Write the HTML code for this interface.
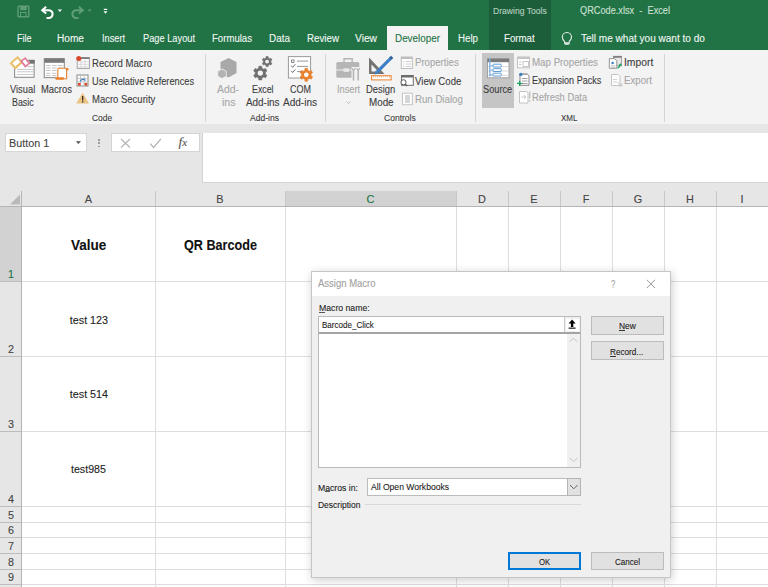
<!DOCTYPE html>
<html><head><meta charset="utf-8"><style>
html,body{margin:0;padding:0;width:768px;height:587px;overflow:hidden;background:#fff;position:relative;font-family:"Liberation Sans",sans-serif}
body>div{position:absolute}
.t{white-space:pre;transform-origin:0 0;-webkit-text-stroke:0.1px currentColor}
</style></head><body>
<div style="left:0px;top:0px;width:768px;height:50px;background:#217346"></div>
<div style="left:488.75px;top:0px;width:62.25px;height:50px;background:#1b5e39"></div>
<div class="t" style="left:493.40px;top:6.99px;font-size:8.87px;line-height:8.87px;color:#b9d1c1;transform:scaleX(0.969);">Drawing Tools</div>
<div class="t" style="left:580.00px;top:5.94px;font-size:10.47px;line-height:10.47px;color:#cfe1d5;transform:scaleX(0.879);">QRCode.xlsx&nbsp;&nbsp;-&nbsp;&nbsp;Excel</div>
<div style="left:386.5px;top:26px;width:61.5px;height:24px;background:#f3f3f3"></div>
<div class="t" style="left:16.50px;top:33.02px;font-size:10.61px;line-height:10.61px;color:#f2f7f4;transform:scaleX(0.848);">File</div>
<div class="t" style="left:57.00px;top:33.02px;font-size:10.61px;line-height:10.61px;color:#f2f7f4;transform:scaleX(0.954);">Home</div>
<div class="t" style="left:102.00px;top:33.02px;font-size:10.61px;line-height:10.61px;color:#f2f7f4;transform:scaleX(0.867);">Insert</div>
<div class="t" style="left:143.00px;top:33.02px;font-size:10.61px;line-height:10.61px;color:#f2f7f4;transform:scaleX(0.873);">Page Layout</div>
<div class="t" style="left:212.00px;top:33.02px;font-size:10.61px;line-height:10.61px;color:#f2f7f4;transform:scaleX(0.905);">Formulas</div>
<div class="t" style="left:269.00px;top:33.02px;font-size:10.61px;line-height:10.61px;color:#f2f7f4;transform:scaleX(0.937);">Data</div>
<div class="t" style="left:307.00px;top:33.02px;font-size:10.61px;line-height:10.61px;color:#f2f7f4;transform:scaleX(0.920);">Review</div>
<div class="t" style="left:355.00px;top:33.02px;font-size:10.61px;line-height:10.61px;color:#f2f7f4;transform:scaleX(0.965);">View</div>
<div class="t" style="left:457.50px;top:33.02px;font-size:10.61px;line-height:10.61px;color:#f2f7f4;transform:scaleX(0.917);">Help</div>
<div class="t" style="left:504.00px;top:33.02px;font-size:10.61px;line-height:10.61px;color:#f2f7f4;transform:scaleX(0.914);">Format</div>
<div class="t" style="left:580.60px;top:33.02px;font-size:10.61px;line-height:10.61px;color:#f2f7f4;transform:scaleX(0.946);">Tell me what you want to do</div>
<div class="t" style="left:395.00px;top:33.02px;font-size:10.61px;line-height:10.61px;color:#217346;transform:scaleX(0.930);">Developer</div>
<div style="left:0px;top:50px;width:768px;height:74px;background:#f3f3f3"></div>
<div style="left:205px;top:54px;width:1px;height:68px;background:#d4d4d4"></div>
<div style="left:325px;top:54px;width:1px;height:68px;background:#d4d4d4"></div>
<div style="left:475px;top:54px;width:1px;height:68px;background:#d4d4d4"></div>
<div style="left:664px;top:54px;width:1px;height:68px;background:#d4d4d4"></div>
<div class="t" style="left:9.70px;top:85.06px;font-size:10.32px;line-height:10.32px;color:#3c3c3c;transform:scaleX(0.903);">Visual</div>
<div class="t" style="left:12.30px;top:97.96px;font-size:10.32px;line-height:10.32px;color:#3c3c3c;transform:scaleX(0.860);">Basic</div>
<div class="t" style="left:40.60px;top:85.06px;font-size:10.32px;line-height:10.32px;color:#3c3c3c;transform:scaleX(0.916);">Macros</div>
<div class="t" style="left:91.50px;top:57.90px;font-size:10.76px;line-height:10.76px;color:#3c3c3c;transform:scaleX(0.891);">Record Macro</div>
<div class="t" style="left:91.50px;top:75.90px;font-size:10.76px;line-height:10.76px;color:#3c3c3c;transform:scaleX(0.858);">Use Relative References</div>
<div class="t" style="left:91.50px;top:93.90px;font-size:10.76px;line-height:10.76px;color:#3c3c3c;transform:scaleX(0.883);">Macro Security</div>
<div class="t" style="left:91.90px;top:114.03px;font-size:9.30px;line-height:9.30px;color:#3c3c3c;transform:scaleX(0.904);">Code</div>
<div class="t" style="left:217.20px;top:85.06px;font-size:10.32px;line-height:10.32px;color:#a6a6a6;transform:scaleX(1.009);">Add-</div>
<div class="t" style="left:221.50px;top:97.96px;font-size:10.32px;line-height:10.32px;color:#a6a6a6;transform:scaleX(1.023);">ins</div>
<div class="t" style="left:251.90px;top:84.86px;font-size:10.32px;line-height:10.32px;color:#3c3c3c;transform:scaleX(0.856);">Excel</div>
<div class="t" style="left:246.00px;top:97.96px;font-size:10.32px;line-height:10.32px;color:#3c3c3c;transform:scaleX(0.960);">Add-ins</div>
<div class="t" style="left:289.50px;top:84.86px;font-size:10.32px;line-height:10.32px;color:#3c3c3c;transform:scaleX(0.872);">COM</div>
<div class="t" style="left:283.10px;top:97.96px;font-size:10.32px;line-height:10.32px;color:#3c3c3c;transform:scaleX(0.972);">Add-ins</div>
<div class="t" style="left:250.40px;top:114.03px;font-size:9.30px;line-height:9.30px;color:#3c3c3c;transform:scaleX(0.919);">Add-ins</div>
<div class="t" style="left:336.50px;top:85.06px;font-size:10.32px;line-height:10.32px;color:#a6a6a6;transform:scaleX(0.899);">Insert</div>
<div class="t" style="left:366.40px;top:84.86px;font-size:10.32px;line-height:10.32px;color:#3c3c3c;transform:scaleX(0.909);">Design</div>
<div class="t" style="left:369.00px;top:98.16px;font-size:10.32px;line-height:10.32px;color:#3c3c3c;transform:scaleX(0.953);">Mode</div>
<div class="t" style="left:415.40px;top:57.20px;font-size:10.76px;line-height:10.76px;color:#a6a6a6;transform:scaleX(0.893);">Properties</div>
<div class="t" style="left:415.40px;top:75.50px;font-size:10.76px;line-height:10.76px;color:#3c3c3c;transform:scaleX(0.895);">View Code</div>
<div class="t" style="left:415.40px;top:93.70px;font-size:10.76px;line-height:10.76px;color:#a6a6a6;transform:scaleX(0.898);">Run Dialog</div>
<div class="t" style="left:384.00px;top:114.03px;font-size:9.30px;line-height:9.30px;color:#3c3c3c;transform:scaleX(0.918);">Controls</div>
<div style="left:481.9px;top:53.3px;width:32.5px;height:55.1px;background:#c5c5c5"></div>
<div class="t" style="left:483.40px;top:85.06px;font-size:10.32px;line-height:10.32px;color:#3c3c3c;transform:scaleX(0.893);">Source</div>
<div class="t" style="left:532.00px;top:56.90px;font-size:10.76px;line-height:10.76px;color:#a6a6a6;transform:scaleX(0.905);">Map Properties</div>
<div class="t" style="left:532.00px;top:74.60px;font-size:10.76px;line-height:10.76px;color:#3c3c3c;transform:scaleX(0.839);">Expansion Packs</div>
<div class="t" style="left:532.00px;top:91.60px;font-size:10.76px;line-height:10.76px;color:#a6a6a6;transform:scaleX(0.871);">Refresh Data</div>
<div class="t" style="left:624.00px;top:56.90px;font-size:10.76px;line-height:10.76px;color:#3c3c3c;transform:scaleX(0.961);">Import</div>
<div class="t" style="left:624.00px;top:74.60px;font-size:10.76px;line-height:10.76px;color:#a6a6a6;transform:scaleX(0.901);">Export</div>
<div class="t" style="left:561.30px;top:114.03px;font-size:9.30px;line-height:9.30px;color:#3c3c3c;transform:scaleX(0.863);">XML</div>
<svg style="position:absolute;left:17px;top:5px;width:13px;height:13px;overflow:visible" viewBox="0 0 13 13"><rect x="1" y="1.2" width="10.8" height="10.5" rx="0.8" fill="none" stroke="#5f9d78" stroke-width="1.4"/><rect x="3.2" y="1.2" width="6.5" height="4" fill="#5f9d78"/><rect x="3.5" y="7.5" width="5.5" height="4" fill="none" stroke="#5f9d78" stroke-width="1"/></svg>
<svg style="position:absolute;left:40px;top:6px;width:16px;height:13px;overflow:visible" viewBox="0 0 16 13"><path d="M3 4.2 H9.5 A4 4 0 0 1 9.5 12 H6.5" fill="none" stroke="#fff" stroke-width="2"/><path d="M6.2 0.8 L2.2 4.2 L6.2 7.6" fill="none" stroke="#fff" stroke-width="2"/></svg>
<svg style="position:absolute;left:57px;top:9px;width:6px;height:4px;overflow:visible" viewBox="0 0 6 4"><path d="M0.8 0.6 H5 L2.9 3 Z" fill="#fff"/></svg>
<svg style="position:absolute;left:69px;top:6px;width:16px;height:13px;overflow:visible" viewBox="0 0 16 13"><path d="M13 4.2 H6.5 A4 4 0 0 0 6.5 12 H9.5" fill="none" stroke="#5f9d78" stroke-width="2"/><path d="M9.8 0.8 L13.8 4.2 L9.8 7.6" fill="none" stroke="#5f9d78" stroke-width="2"/></svg>
<svg style="position:absolute;left:87px;top:9px;width:5px;height:4px;overflow:visible" viewBox="0 0 5 4"><path d="M0.8 0.6 H4.4 L2.6 2.8 Z" fill="#5f9d78"/></svg>
<svg style="position:absolute;left:103px;top:8px;width:5px;height:7px;overflow:visible" viewBox="0 0 5 7"><rect x="0.8" y="0.8" width="3.4" height="1.2" fill="#fff"/><path d="M0.5 3.2 H4.5 L2.5 5.8 Z" fill="#fff"/></svg>
<svg style="position:absolute;left:561px;top:32px;width:12px;height:14px;overflow:visible" viewBox="0 0 12 14"><path d="M3.7 9.6 C2 8.2 1.3 6.6 1.3 5.1 A4.6 4.6 0 0 1 10.5 5.1 C10.5 6.6 9.8 8.2 8.1 9.6 V11.6 H3.7 Z" fill="none" stroke="#e8f0eb" stroke-width="1.1"/><rect x="4.1" y="10.2" width="3.6" height="2.6" fill="#d5e4da"/></svg>
<svg style="position:absolute;left:13px;top:55px;width:24px;height:25px;overflow:visible" viewBox="0 0 24 25"><rect x="1.6" y="5.4" width="19.5" height="16.9" fill="#fff" stroke="#8f8f8f" stroke-width="1.1"/><rect x="16.3" y="4.9" width="5.3" height="3.8" fill="#737373"/><g stroke="#c2c2c2" stroke-width="0.9"><path d="M4 14.4H20M4 16.8H20M4 19.5H20M14 11.6H20"/></g><g transform="translate(3.3 7.6) rotate(-42)"><rect x="-4.4" y="-3.1" width="8.8" height="6.2" fill="#fff" stroke="#e9c06a" stroke-width="2"/><rect x="-5.4" y="3" width="10.8" height="1.4" fill="#e9c06a"/></g><g transform="translate(12.3 7.3) rotate(52)"><rect x="-3.3" y="-2.4" width="6.6" height="4.8" fill="#fff" stroke="#e27c98" stroke-width="1.6"/><rect x="-4.1" y="2.3" width="8.2" height="1.1" fill="#e27c98"/></g></svg>
<svg style="position:absolute;left:43px;top:57px;width:26px;height:24px;overflow:visible" viewBox="0 0 26 24"><rect x="1.3" y="1.6" width="20" height="19" fill="#fff" stroke="#8f8f8f" stroke-width="1.1"/><rect x="1.3" y="1.6" width="20" height="4.2" fill="#7a7a7a"/><g stroke="#c0c0c0" stroke-width="0.9" stroke-dasharray="4.6 1.4"><path d="M3 8.5H20M3 11H20M3 13.5H20M3 16.3H20M3 18.5H20"/></g><path d="M14.8 21.5 V12.6 Q14.8 11.3 16.1 11.3 H23.2 Q23.6 11.3 23.6 12.4 V21.8 H14.8 Z" fill="#fff" stroke="#e8822e" stroke-width="1.1"/><circle cx="24.2" cy="12.3" r="1.3" fill="#e8822e"/><rect x="12.3" y="20.2" width="9" height="2.6" rx="1.2" fill="#e8822e"/></svg>
<svg style="position:absolute;left:76px;top:55px;width:15px;height:15px;overflow:visible" viewBox="0 0 15 15"><rect x="1.2" y="2.6" width="12.2" height="10.8" fill="#fff" stroke="#9a9a9a" stroke-width="0.9"/><rect x="1.2" y="2.4" width="12.2" height="1.6" fill="#7a7a7a"/><g stroke="#d0d0d0" stroke-width="0.8"><path d="M2 6.8H13M2 9.3H13M2 11.8H13M5 4.5V13M9 4.5V13"/></g><circle cx="2.8" cy="3.6" r="2.5" fill="#d9472b"/></svg>
<svg style="position:absolute;left:76px;top:74px;width:14px;height:13px;overflow:visible" viewBox="0 0 14 13"><rect x="1" y="1" width="11" height="11" fill="#fff" stroke="#8c8c8c" stroke-width="1"/><g stroke="#b5b5b5" stroke-width="0.8"><path d="M1 4.5H12M1 8H12M4.5 1V12M8 1V12"/></g><path d="M4 7.5 Q6.5 3.8 9.5 6.5" fill="none" stroke="#3b7fc4" stroke-width="1.3"/><rect x="2" y="9" width="2.6" height="2.6" fill="#d9472b"/><rect x="8.6" y="9" width="2.6" height="2.6" fill="#d9472b"/></svg>
<svg style="position:absolute;left:76px;top:92px;width:14px;height:12px;overflow:visible" viewBox="0 0 14 12"><path d="M6.6 0.8 L13 11.5 H0.2 Z" fill="#eac282"/><rect x="6" y="4" width="1.3" height="4.5" fill="#333"/><rect x="6" y="9.2" width="1.3" height="1.3" fill="#333"/></svg>
<svg style="position:absolute;left:216px;top:57px;width:23px;height:23px;overflow:visible" viewBox="0 0 23 23"><path d="M12.5 1 L20.5 5 V16 L12.5 20.5 L4.5 16 V5 Z" fill="#a9a9a9"/><path d="M6 12 L10.3 14.3 V19.3 L6 21.6 L1.7 19.3 V14.3 Z" fill="#b3b3b3" stroke="#f3f3f3" stroke-width="0.8"/></svg>
<svg style="position:absolute;left:251px;top:55px;width:25px;height:27px;overflow:visible" viewBox="0 0 25 27"><polygon points="14.39,19.18 15.96,20.26 14.50,22.78 12.78,21.96 10.91,23.05 10.76,24.95 7.84,24.95 7.69,23.05 5.82,21.96 4.10,22.78 2.64,20.26 4.21,19.18 4.21,17.02 2.64,15.94 4.10,13.42 5.82,14.24 7.69,13.15 7.84,11.25 10.76,11.25 10.91,13.15 12.78,14.24 14.50,13.42 15.96,15.94 14.39,17.02" fill="#6f6f6f" stroke="#6f6f6f" stroke-width="0.6" stroke-linejoin="round"/><circle cx="9.3" cy="18.1" r="2.7" fill="#f3f3f3"/><polygon points="19.82,7.39 20.95,8.18 19.89,10.01 18.64,9.42 17.27,10.21 17.16,11.59 15.04,11.59 14.93,10.21 13.56,9.42 12.31,10.01 11.25,8.18 12.38,7.39 12.38,5.81 11.25,5.02 12.31,3.19 13.56,3.78 14.93,2.99 15.04,1.61 17.16,1.61 17.27,2.99 18.64,3.78 19.89,3.19 20.95,5.02 19.82,5.81" fill="#6f6f6f" stroke="#6f6f6f" stroke-width="0.6" stroke-linejoin="round"/><circle cx="16.1" cy="6.6" r="1.9" fill="#f3f3f3"/></svg>
<svg style="position:absolute;left:287px;top:55px;width:28px;height:27px;overflow:visible" viewBox="0 0 28 27"><rect x="1.4" y="1.6" width="22.2" height="21.4" fill="#fff" stroke="#9a9a9a" stroke-width="1"/><rect x="4.6" y="5" width="2.4" height="2.4" fill="none" stroke="#6f6f6f" stroke-width="0.8"/><path d="M10 6.1H21.2M10 11.4H21.2M10 16.6H15" stroke="#8a8a8a" stroke-width="0.9"/><path d="M4.2 10.6 L5.6 12.3 L8.4 9.2M4.2 15.8 L5.6 17.5 L8.4 14.4" fill="none" stroke="#6f6f6f" stroke-width="1"/><polygon points="24.00,20.80 25.58,21.84 24.20,24.22 22.51,23.37 20.78,24.37 20.67,26.26 17.93,26.26 17.82,24.37 16.09,23.37 14.40,24.22 13.02,21.84 14.60,20.80 14.60,18.80 13.02,17.76 14.40,15.38 16.09,16.23 17.82,15.23 17.93,13.34 20.67,13.34 20.78,15.23 22.51,16.23 24.20,15.38 25.58,17.76 24.00,18.80" fill="#e8822e" stroke="#e8822e" stroke-width="0.6" stroke-linejoin="round"/><circle cx="19.3" cy="19.8" r="2.3" fill="#fff"/></svg>
<svg style="position:absolute;left:335px;top:57px;width:27px;height:25px;overflow:visible" viewBox="0 0 27 25"><path d="M9 5 V1.8 H17.2 V5" fill="none" stroke="#b5b5b5" stroke-width="1.4"/><rect x="1.3" y="4.9" width="23" height="15.9" rx="1.5" fill="#b5b5b5"/><rect x="1.3" y="12.3" width="23" height="1.3" fill="#e4e4e4"/><rect x="8.5" y="11.3" width="5.6" height="3.6" fill="#e8e8e8"/><rect x="16.5" y="10" width="9" height="15" fill="#f3f3f3"/><path d="M18.5 12.5 V23.5 M23.2 12.5 V23.5" stroke="#b5b5b5" stroke-width="1.6"/><path d="M16.8 11 Q18.5 15 20.2 11" fill="none" stroke="#b5b5b5" stroke-width="1.3"/><path d="M21.5 11 Q23.2 15 24.9 11" fill="none" stroke="#b5b5b5" stroke-width="1.3"/></svg>
<svg style="position:absolute;left:346px;top:101px;width:5px;height:3px;overflow:visible" viewBox="0 0 5 3"><path d="M0.5 0.5 L2.5 2.5 L4.5 0.5" fill="none" stroke="#b5b5b5" stroke-width="0.9"/></svg>
<svg style="position:absolute;left:367px;top:55px;width:27px;height:27px;overflow:visible" viewBox="0 0 27 27"><path d="M2 2.6 L17.6 18.9 H2 Z" fill="#737373"/><path d="M4.5 9.6 L11.2 16.5 H4.5 Z" fill="#f3f3f3"/><path d="M23.6 3.4 L10.2 16.8" stroke="#3f7fc5" stroke-width="3.2"/><path d="M25.2 1.8 L23.3 3.7" stroke="#2f5f95" stroke-width="3.2"/><path d="M8.7 15.4 L11.6 18.3 L7.6 19.6 Z" fill="#3f7fc5"/><rect x="4.6" y="20.7" width="19.6" height="4.2" fill="#fff" stroke="#e8822e" stroke-width="1"/><path d="M6.5 21.2V22.6M8.5 21.2V22.2M10.5 21.2V22.6M12.5 21.2V22.2M14.5 21.2V22.6M16.5 21.2V22.2M18.5 21.2V22.6M20.5 21.2V22.2M22.5 21.2V22.6" stroke="#e8822e" stroke-width="0.6"/></svg>
<svg style="position:absolute;left:400px;top:56px;width:14px;height:14px;overflow:visible" viewBox="0 0 14 14"><rect x="1.3" y="1" width="11" height="11.5" fill="#fff" stroke="#bdbdbd" stroke-width="1"/><rect x="1.3" y="1" width="11" height="2" fill="#bdbdbd"/><path d="M3 5.5H4.5M3 8H4.5M3 10.5H4.5M6 5.5H11M6 8H11M6 10.5H11" stroke="#c8c8c8" stroke-width="0.9"/></svg>
<svg style="position:absolute;left:399px;top:74px;width:16px;height:13px;overflow:visible" viewBox="0 0 16 13"><rect x="2.5" y="1.5" width="11.8" height="9.8" fill="#fff" stroke="#6d6d6d" stroke-width="1"/><rect x="2.5" y="1.5" width="11.8" height="2" fill="#6d6d6d"/><circle cx="4.5" cy="8.3" r="2.6" fill="#fff" stroke="#555" stroke-width="1"/><path d="M6.3 10.2 L8.2 12.2" stroke="#555" stroke-width="1.2"/></svg>
<svg style="position:absolute;left:401px;top:92px;width:13px;height:14px;overflow:visible" viewBox="0 0 13 14"><rect x="1.5" y="1.2" width="9.8" height="11.5" fill="#fff" stroke="#c4c4c4" stroke-width="1"/><rect x="4" y="3" width="5" height="8" fill="#d6d6d6"/></svg>
<svg style="position:absolute;left:486px;top:57px;width:25px;height:23px;overflow:visible" viewBox="0 0 25 23"><rect x="1.5" y="1.8" width="21.5" height="19" fill="#fff" stroke="#9a9a9a" stroke-width="0.9"/><rect x="1.5" y="1.6" width="21.5" height="3.6" fill="#7a7a7a"/><path d="M2 9.6H22.5M2 14H22.5M2 18.4H22.5" stroke="#d6d6d6" stroke-width="0.9"/><path d="M3.8 0.8 V19.5" stroke="#7fb0e0" stroke-width="1.3"/><g fill="#fff" stroke="#5b9bd5" stroke-width="1"><rect x="7" y="7.2" width="8.2" height="2.8" rx="0.5"/><rect x="7" y="11.7" width="8.2" height="2.8" rx="0.5"/><rect x="7" y="16.2" width="8.2" height="2.8" rx="0.5"/></g><path d="M3.8 8.6H7M3.8 13.1H7M3.8 17.6H7" stroke="#7fb0e0" stroke-width="0.9"/></svg>
<svg style="position:absolute;left:516px;top:56px;width:15px;height:13px;overflow:visible" viewBox="0 0 15 13"><rect x="1.5" y="1" width="12" height="10.8" fill="#fff" stroke="#c4c4c4" stroke-width="1"/><rect x="1.5" y="1" width="12" height="2" fill="#c4c4c4"/><rect x="7" y="5.5" width="5.5" height="5" fill="none" stroke="#c4c4c4" stroke-width="0.9"/><path d="M3 6H5.5M3 8.5H5.5" stroke="#c4c4c4" stroke-width="0.9"/></svg>
<svg style="position:absolute;left:516px;top:72px;width:15px;height:15px;overflow:visible" viewBox="0 0 15 15"><path d="M4 2 H11.2 L13 3.8 V13.3 H4 Z" fill="#fff" stroke="#7a7a7a" stroke-width="0.9"/><path d="M6 6.5H11.5M6 9H11.5M6 11.5H11.5" stroke="#8a8a8a" stroke-width="0.8"/><path d="M5.5 2.3H10.5" stroke="#6f6f6f" stroke-width="0.8" stroke-dasharray="1 1"/><circle cx="4.8" cy="2.4" r="1.7" fill="#3b7fc4"/><path d="M1 11.4H6.2M3.6 8.8V14" stroke="#21a366" stroke-width="1.3"/></svg>
<svg style="position:absolute;left:518px;top:90px;width:13px;height:15px;overflow:visible" viewBox="0 0 13 15"><path d="M1.5 1.5 H8.5 L10 3 V13 H1.5 Z" fill="#fff" stroke="#c4c4c4" stroke-width="1"/><path d="M3.5 7 H8 M6 5 L8 7 L6 9" fill="none" stroke="#c4c4c4" stroke-width="0.9"/><rect x="11" y="1.5" width="1.4" height="7" fill="#c4c4c4"/><rect x="11" y="10" width="1.4" height="1.6" fill="#c4c4c4"/></svg>
<svg style="position:absolute;left:608px;top:55px;width:15px;height:15px;overflow:visible" viewBox="0 0 15 15"><rect x="5.5" y="1.3" width="8" height="9.5" fill="#e6e6e6" stroke="#9a9a9a" stroke-width="0.9"/><rect x="5.5" y="1.1" width="8" height="1.6" fill="#7a7a7a"/><path d="M1.3 3.6 H6.6 L8.8 5.8 V13.3 H1.3 Z" fill="#fff" stroke="#8a8a8a" stroke-width="0.9"/><circle cx="4.6" cy="8" r="1.3" fill="#3b7fc4"/><path d="M2.8 10.8H7.5M2.8 12.2H7.5" stroke="#b0b0b0" stroke-width="0.7"/><path d="M9.5 13 Q11.8 12.5 12.3 9.3 M10.8 10.6 L12.3 9 L13.6 10.6" fill="none" stroke="#21a366" stroke-width="1.1"/></svg>
<svg style="position:absolute;left:610px;top:73px;width:13px;height:14px;overflow:visible" viewBox="0 0 13 14"><path d="M1.5 1.5 H8 L10 3.5 V12.5 H1.5 Z" fill="#fff" stroke="#c4c4c4" stroke-width="1"/><path d="M3 6.5H7M3 9H7" stroke="#c4c4c4" stroke-width="0.8"/><path d="M7.5 9.5 L11.5 12.5 M9 13 H11.8 V10.3" fill="none" stroke="#c4c4c4" stroke-width="1"/></svg>
<div style="left:0px;top:124px;width:768px;height:83px;background:#e6e6e6"></div>
<div style="left:4.5px;top:133.4px;width:82px;height:19px;background:#fff;border:1px solid #d6d6d6;box-sizing:border-box"></div>
<div class="t" style="left:8.80px;top:137.65px;font-size:11.05px;line-height:11.05px;color:#444;transform:scaleX(0.977);">Button 1</div>
<div style="left:111px;top:133px;width:89px;height:19px;background:#fff;border:1px solid #d4d4d4;box-sizing:border-box"></div>
<div style="left:202px;top:133px;width:566px;height:50px;background:#fff;border-left:1px solid #d4d4d4;border-bottom:1px solid #d4d4d4;box-sizing:border-box"></div>
<svg style="position:absolute;left:75px;top:140px;width:7px;height:5px;overflow:visible" viewBox="0 0 7 5"><path d="M0.8 1.2 H6 L3.4 4 Z" fill="#555"/></svg>
<div style="left:98px;top:139.2px;width:1.6px;height:1.6px;background:#9a9a9a"></div>
<div style="left:98px;top:142.4px;width:1.6px;height:1.6px;background:#9a9a9a"></div>
<div style="left:98px;top:145.6px;width:1.6px;height:1.6px;background:#9a9a9a"></div>
<svg style="position:absolute;left:120px;top:138px;width:11px;height:10px;overflow:visible" viewBox="0 0 11 10"><path d="M1 1 L10 9.5 M10 1 L1 9.5" stroke="#b3b3b3" stroke-width="1.1"/></svg>
<svg style="position:absolute;left:149px;top:138px;width:13px;height:11px;overflow:visible" viewBox="0 0 13 11"><path d="M1.2 5.6 L4.6 9.5 L11.8 1" fill="none" stroke="#b3b3b3" stroke-width="1.2"/></svg>
<div class="t" style="position:absolute;left:178.5px;top:134.5px;font-family:&quot;Liberation Serif&quot;,serif;font-style:italic;font-size:13.5px;line-height:14px;color:#555">f<span style="font-size:11px">x</span></div>
<div style="left:0px;top:206px;width:768px;height:381px;background:#fff"></div>
<div style="left:0px;top:191px;width:768px;height:15px;background:#e6e6e6"></div>
<div style="left:0px;top:206px;width:21px;height:381px;background:#e6e6e6"></div>
<div style="left:285px;top:191px;width:171px;height:15px;background:#d2d2d2"></div>
<div style="left:0px;top:207px;width:21px;height:74px;background:#d2d2d2"></div>
<div style="left:155px;top:191px;width:1px;height:15px;background:#c8c8c8"></div>
<div style="left:155px;top:207px;width:1px;height:380px;background:#dedede"></div>
<div style="left:285px;top:191px;width:1px;height:15px;background:#c8c8c8"></div>
<div style="left:285px;top:207px;width:1px;height:380px;background:#dedede"></div>
<div style="left:456px;top:191px;width:1px;height:15px;background:#c8c8c8"></div>
<div style="left:456px;top:207px;width:1px;height:380px;background:#dedede"></div>
<div style="left:508px;top:191px;width:1px;height:15px;background:#c8c8c8"></div>
<div style="left:508px;top:207px;width:1px;height:380px;background:#dedede"></div>
<div style="left:560px;top:191px;width:1px;height:15px;background:#c8c8c8"></div>
<div style="left:560px;top:207px;width:1px;height:380px;background:#dedede"></div>
<div style="left:612px;top:191px;width:1px;height:15px;background:#c8c8c8"></div>
<div style="left:612px;top:207px;width:1px;height:380px;background:#dedede"></div>
<div style="left:664px;top:191px;width:1px;height:15px;background:#c8c8c8"></div>
<div style="left:664px;top:207px;width:1px;height:380px;background:#dedede"></div>
<div style="left:716px;top:191px;width:1px;height:15px;background:#c8c8c8"></div>
<div style="left:716px;top:207px;width:1px;height:380px;background:#dedede"></div>
<div style="left:0px;top:281px;width:21px;height:1px;background:#bdbdbd"></div>
<div style="left:22px;top:281px;width:746px;height:1px;background:#dedede"></div>
<div style="left:0px;top:356px;width:21px;height:1px;background:#bdbdbd"></div>
<div style="left:22px;top:356px;width:746px;height:1px;background:#dedede"></div>
<div style="left:0px;top:431px;width:21px;height:1px;background:#bdbdbd"></div>
<div style="left:22px;top:431px;width:746px;height:1px;background:#dedede"></div>
<div style="left:0px;top:506px;width:21px;height:1px;background:#bdbdbd"></div>
<div style="left:22px;top:506px;width:746px;height:1px;background:#dedede"></div>
<div style="left:0px;top:522px;width:21px;height:1px;background:#bdbdbd"></div>
<div style="left:22px;top:522px;width:746px;height:1px;background:#dedede"></div>
<div style="left:0px;top:537px;width:21px;height:1px;background:#bdbdbd"></div>
<div style="left:22px;top:537px;width:746px;height:1px;background:#dedede"></div>
<div style="left:0px;top:553px;width:21px;height:1px;background:#bdbdbd"></div>
<div style="left:22px;top:553px;width:746px;height:1px;background:#dedede"></div>
<div style="left:0px;top:569px;width:21px;height:1px;background:#bdbdbd"></div>
<div style="left:22px;top:569px;width:746px;height:1px;background:#dedede"></div>
<div style="left:0px;top:584px;width:21px;height:1px;background:#bdbdbd"></div>
<div style="left:22px;top:584px;width:746px;height:1px;background:#dedede"></div>
<div style="left:0px;top:206px;width:768px;height:1px;background:#b4b4b4"></div>
<div style="left:21px;top:191px;width:1px;height:396px;background:#b4b4b4"></div>
<svg style="position:absolute;left:9px;top:194px;width:12px;height:11px;overflow:visible" viewBox="0 0 12 11"><path d="M11 0.5 V10.5 H1 Z" fill="#b9b9b9"/></svg>
<div class="t" style="left:84.86px;top:194.47px;font-size:10.90px;line-height:10.90px;color:#444;">A</div>
<div class="t" style="left:216.36px;top:194.47px;font-size:10.90px;line-height:10.90px;color:#444;">B</div>
<div class="t" style="left:366.56px;top:194.47px;font-size:10.90px;line-height:10.90px;color:#217346;">C</div>
<div class="t" style="left:478.06px;top:194.47px;font-size:10.90px;line-height:10.90px;color:#444;">D</div>
<div class="t" style="left:530.36px;top:194.47px;font-size:10.90px;line-height:10.90px;color:#444;">E</div>
<div class="t" style="left:582.67px;top:194.47px;font-size:10.90px;line-height:10.90px;color:#444;">F</div>
<div class="t" style="left:633.76px;top:194.47px;font-size:10.90px;line-height:10.90px;color:#444;">G</div>
<div class="t" style="left:686.06px;top:194.47px;font-size:10.90px;line-height:10.90px;color:#444;">H</div>
<div class="t" style="left:740.49px;top:194.47px;font-size:10.90px;line-height:10.90px;color:#444;">I</div>
<div class="t" style="left:7.91px;top:269.40px;font-size:10.76px;line-height:10.76px;color:#217346;">1</div>
<div class="t" style="left:7.91px;top:344.40px;font-size:10.76px;line-height:10.76px;color:#444;">2</div>
<div class="t" style="left:7.91px;top:419.40px;font-size:10.76px;line-height:10.76px;color:#444;">3</div>
<div class="t" style="left:7.91px;top:494.40px;font-size:10.76px;line-height:10.76px;color:#444;">4</div>
<div class="t" style="left:7.91px;top:510.40px;font-size:10.76px;line-height:10.76px;color:#444;">5</div>
<div class="t" style="left:7.91px;top:525.40px;font-size:10.76px;line-height:10.76px;color:#444;">6</div>
<div class="t" style="left:7.91px;top:541.40px;font-size:10.76px;line-height:10.76px;color:#444;">7</div>
<div class="t" style="left:7.91px;top:557.40px;font-size:10.76px;line-height:10.76px;color:#444;">8</div>
<div class="t" style="left:7.91px;top:572.40px;font-size:10.76px;line-height:10.76px;color:#444;">9</div>
<div class="t" style="left:71.40px;top:238.00px;font-size:14.53px;line-height:14.53px;color:#111;font-weight:bold;transform:scaleX(0.932);">Value</div>
<div class="t" style="left:184.00px;top:238.00px;font-size:14.53px;line-height:14.53px;color:#111;font-weight:bold;transform:scaleX(0.869);">QR Barcode</div>
<div class="t" style="left:69.80px;top:314.60px;font-size:10.76px;line-height:10.76px;color:#222;">test 123</div>
<div class="t" style="left:69.80px;top:389.10px;font-size:10.76px;line-height:10.76px;color:#222;">test 514</div>
<div class="t" style="left:71.40px;top:464.10px;font-size:10.76px;line-height:10.76px;color:#222;transform:scaleX(0.989);">test985</div>
<div style="left:311px;top:271px;width:360px;height:307px;background:#f0f0f0;border:1px solid #c6c6c6;box-sizing:border-box;box-shadow:1px 2px 9px rgba(0,0,0,0.2)"></div>
<div style="left:312px;top:272px;width:358px;height:24.2px;background:#fff"></div>
<div class="t" style="left:318.20px;top:279.09px;font-size:10.17px;line-height:10.17px;color:#a0a0a0;transform:scaleX(0.935);">Assign Macro</div>
<div class="t" style="left:611.40px;top:278.70px;font-size:11.34px;line-height:11.34px;color:#a0a0a0;transform:scaleX(0.666);">?</div>
<svg style="position:absolute;left:646px;top:279px;width:10px;height:10px;overflow:visible" viewBox="0 0 10 10"><path d="M0.8 0.8 L9 9 M9 0.8 L0.8 9" stroke="#9a9a9a" stroke-width="1"/></svg>
<div class="t" style="left:318.60px;top:303.13px;font-size:9.88px;line-height:9.88px;color:#222;transform:scaleX(0.879);">Macro name:</div>
<div style="left:319px;top:312px;width:6px;height:1px;background:#555"></div>
<div style="left:318px;top:316px;width:263px;height:17.5px;background:#fff;border:1px solid #bababa;border-bottom:2px solid #a4a4a4;box-sizing:border-box"></div>
<div class="t" style="left:321.50px;top:320.63px;font-size:9.30px;line-height:9.30px;color:#222;transform:scaleX(0.864);">Barcode_Click</div>
<div style="left:564px;top:317px;width:16px;height:15px;background:#f0f0f0;border-left:1px solid #c8c8c8;box-sizing:border-box"></div>
<div style="left:566px;top:318.5px;width:13px;height:12px;background:#fff"></div>
<svg style="position:absolute;left:567px;top:318px;width:12px;height:12px;overflow:visible" viewBox="0 0 12 12"><path d="M5.1 1.6 L8.6 5.4 H6.3 V8.9 H3.9 V5.4 H1.6 Z" fill="#000"/><rect x="1.6" y="9.6" width="7" height="1.1" fill="#000"/></svg>
<div style="left:318px;top:333.5px;width:263px;height:134.5px;background:#fff;border:1px solid #bababa;border-top:none;box-sizing:border-box"></div>
<div style="left:567px;top:333.5px;width:13px;height:133.5px;background:#f0f0f0"></div>
<svg style="position:absolute;left:569px;top:337px;width:9px;height:6px;overflow:visible" viewBox="0 0 9 6"><path d="M0.8 4.8 L4.5 1 L8.2 4.8" fill="none" stroke="#c4c4c4" stroke-width="1"/></svg>
<svg style="position:absolute;left:569px;top:457px;width:9px;height:6px;overflow:visible" viewBox="0 0 9 6"><path d="M0.8 1 L4.5 4.8 L8.2 1" fill="none" stroke="#c4c4c4" stroke-width="1"/></svg>
<div style="left:590.5px;top:316px;width:73.3px;height:19px;background:#e1e1e1;border:1px solid #bcbcbc;box-sizing:border-box"></div>
<div class="t" style="left:618.80px;top:322.19px;font-size:8.87px;line-height:8.87px;color:#222;transform:scaleX(0.953);">New</div>
<div style="left:618.8px;top:330.2px;width:6.2px;height:0.9px;background:#333"></div>
<div style="left:590.5px;top:341px;width:73.3px;height:19px;background:#e1e1e1;border:1px solid #bcbcbc;box-sizing:border-box"></div>
<div class="t" style="left:610.20px;top:347.59px;font-size:8.87px;line-height:8.87px;color:#222;transform:scaleX(0.923);">Record...</div>
<div style="left:610.4px;top:355.6px;width:5.6px;height:0.9px;background:#333"></div>
<div class="t" style="left:318.40px;top:483.62px;font-size:8.72px;line-height:8.72px;color:#222;transform:scaleX(0.992);">Macros in:</div>
<div style="left:325px;top:491px;width:5px;height:1px;background:#555"></div>
<div style="left:367px;top:478.3px;width:214px;height:18px;background:#fff;border:1px solid #bcbcbc;box-sizing:border-box"></div>
<div style="left:567px;top:478.3px;width:14px;height:18px;background:#e1e1e1;border:1px solid #b4b4b4;box-sizing:border-box"></div>
<svg style="position:absolute;left:569px;top:484px;width:10px;height:6px;overflow:visible" viewBox="0 0 10 6"><path d="M1 1 L4.8 4.8 L8.6 1" fill="none" stroke="#666" stroke-width="1"/></svg>
<div class="t" style="left:370.60px;top:483.37px;font-size:9.01px;line-height:9.01px;color:#222;transform:scaleX(0.953);">All Open Workbooks</div>
<div class="t" style="left:318.40px;top:501.22px;font-size:8.72px;line-height:8.72px;color:#222;transform:scaleX(0.972);">Description</div>
<div style="left:365px;top:504.2px;width:216px;height:1px;background:#d9d9d9"></div>
<div style="left:508.2px;top:552.2px;width:72.7px;height:18.3px;background:#e1e1e1;border:2px solid #0078d7;box-sizing:border-box"></div>
<div class="t" style="left:538.70px;top:557.59px;font-size:8.87px;line-height:8.87px;color:#222;transform:scaleX(0.874);">OK</div>
<div style="left:590.7px;top:552.2px;width:72.9px;height:18.3px;background:#e1e1e1;border:1px solid #bcbcbc;box-sizing:border-box"></div>
<div class="t" style="left:614.80px;top:557.59px;font-size:8.87px;line-height:8.87px;color:#222;transform:scaleX(0.909);">Cancel</div>
</body></html>
